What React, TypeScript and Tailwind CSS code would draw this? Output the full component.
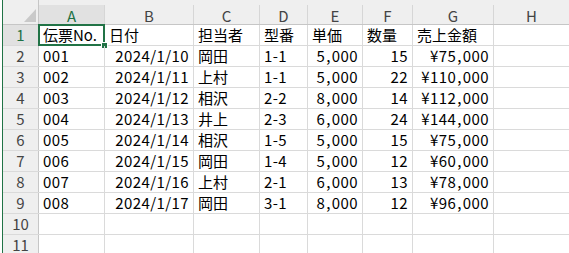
import React from 'react';

const cols = [
  { key: 'A', w: 'w-[66px]' },
  { key: 'B', w: 'w-[89px]' },
  { key: 'C', w: 'w-[66px]' },
  { key: 'D', w: 'w-[48px]' },
  { key: 'E', w: 'w-[55px]' },
  { key: 'F', w: 'w-[50px]' },
  { key: 'G', w: 'w-[81px]' },
  { key: 'H', w: 'flex-1' },
];

// right aligned columns (numbers / dates)
const rightCols = [1, 4, 5, 6];
// columns holding latin digits
const numCols = [0, 1, 3, 4, 5, 6];

const rows: string[][] = [
  ['伝票No.', '日付', '担当者', '型番', '単価', '数量', '売上金額', ''],
  ['001', '2024/1/10', '岡田', '1-1', '5,000', '15', '¥75,000', ''],
  ['002', '2024/1/11', '上村', '1-1', '5,000', '22', '¥110,000', ''],
  ['003', '2024/1/12', '相沢', '2-2', '8,000', '14', '¥112,000', ''],
  ['004', '2024/1/13', '井上', '2-3', '6,000', '24', '¥144,000', ''],
  ['005', '2024/1/14', '相沢', '1-5', '5,000', '15', '¥75,000', ''],
  ['006', '2024/1/15', '岡田', '1-4', '5,000', '12', '¥60,000', ''],
  ['007', '2024/1/16', '上村', '2-1', '6,000', '13', '¥78,000', ''],
  ['008', '2024/1/17', '岡田', '3-1', '8,000', '12', '¥96,000', ''],
  ['', '', '', '', '', '', '', ''],
  ['', '', '', '', '', '', '', ''],
];

const font = { fontFamily: '"Noto Sans CJK JP", "Noto Sans", sans-serif' };

// commas in Excel's font are a bit wider
const withCommas = (s: string) =>
  s.split(',').map((part, i) => (
    <React.Fragment key={i}>
      {i > 0 && <span className="px-[1px]">,</span>}
      {part}
    </React.Fragment>
  ));

const App: React.FC = () => {
  return (
    <div className="w-[569px] h-[253px] overflow-hidden bg-white flex text-[15px]" style={font}>
      {/* left edge */}
      <div className="w-[2px] bg-white" />
      <div className="w-px bg-[#217346]" />

      <div className="flex-1 flex flex-col">
        {/* top strip */}
        <div className="h-[2px] bg-white" />
        <div className="h-px bg-[#d5d5d5]" />

        {/* column headers */}
        <div className="h-[25px] flex bg-[#efefef] border-b border-[#c6c6c6] shrink-0">
          <div className="w-[36px] border-r border-[#c6c6c6] relative shrink-0">
            <svg className="absolute right-[2px] bottom-[2px]" width="12" height="13" viewBox="0 0 12 13">
              <polygon points="12,0 12,13 0,13" fill="#c9c9c9" />
            </svg>
          </div>
          {cols.map((c, i) => (
            <div key={c.key} className={`${c.w} flex flex-col shrink-0`}>
              <div className="h-[5px]" />
              <div
                className={`h-[19px] flex items-center justify-center leading-[16px] pt-[2px] overflow-hidden ${
                  i < cols.length - 1 ? 'border-r border-[#d6d6d6]' : ''
                } ${i === 0 ? 'bg-[#e1e1e1] text-[#1e7145]' : 'text-[#444444]'}`}
              >
                {c.key}
              </div>
            </div>
          ))}
        </div>

        {/* data rows */}
        {rows.map((r, ri) => (
          <div key={ri} className="h-[21px] flex border-b border-[#dadada] shrink-0">
            <div
              className={`w-[36px] shrink-0 flex items-center justify-center leading-[20px] border-r border-[#c6c6c6] ${
                ri === 0 ? 'bg-[#e1e1e1] text-[#1e7145]' : 'bg-[#efefef] text-[#444444]'
              }`}
            >
              {ri + 1}
            </div>
            {cols.map((c, ci) => (
              <div
                key={c.key}
                className={`${c.w} shrink-0 relative flex items-center px-[4px] leading-[20px] whitespace-nowrap text-black ${
                  ci < cols.length - 1 ? 'border-r border-[#dadada]' : ''
                } ${rightCols.includes(ci) && ri > 0 ? 'justify-end' : 'justify-start'} ${
                  numCols.includes(ci) && ri > 0 ? 'tracking-[0.4px]' : ''
                }`}
              >
                {ri > 0 ? withCommas(r[ci]) : r[ci]}
                {ri === 0 && ci === 0 && (
                  <>
                    {/* active cell selection */}
                    <div className="absolute -left-px -top-px -right-px -bottom-px border-2 border-[#217346] pointer-events-none" />
                    <div className="absolute -right-[4px] -bottom-[4px] w-[7px] h-[7px] bg-[#217346] border border-white" />
                  </>
                )}
              </div>
            ))}
          </div>
        ))}
      </div>
    </div>
  );
};

export default App;
